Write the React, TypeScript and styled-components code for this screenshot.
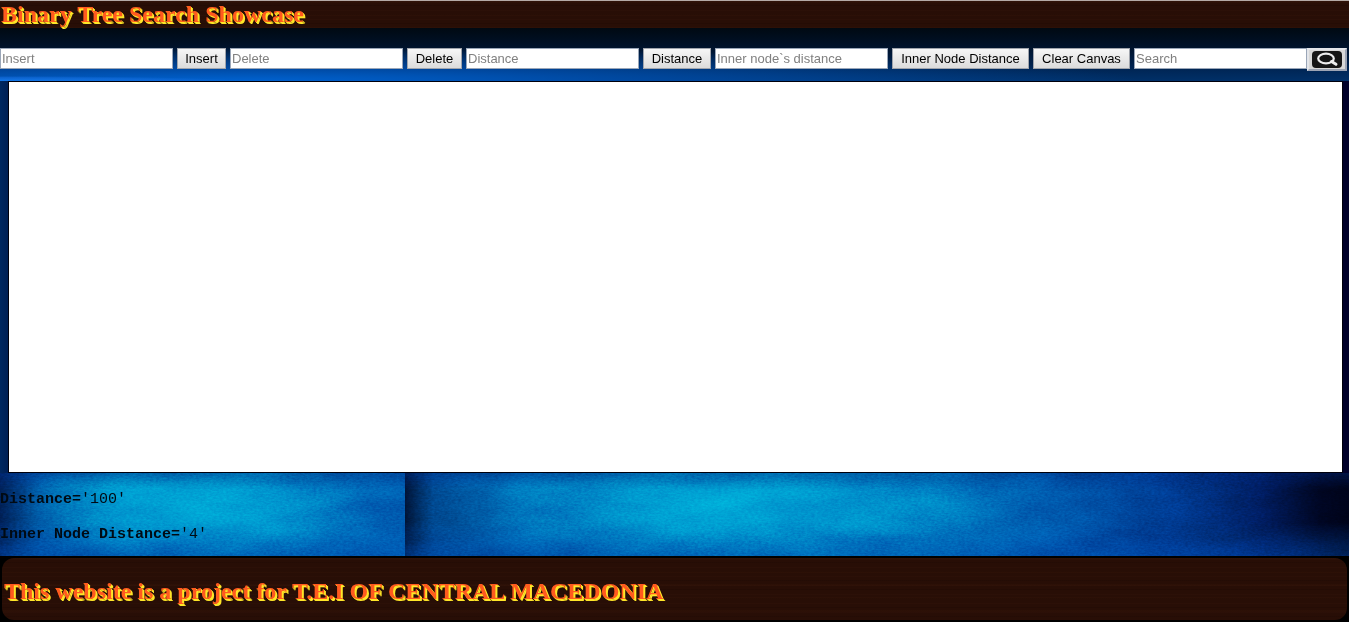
import React from "react";
import styled, { createGlobalStyle } from "styled-components";

const GlobalStyle = createGlobalStyle`
  *, *::before, *::after { box-sizing: border-box; }
  body { margin: 0; background: #fff; }
`;

const woodGrain = `
  repeating-linear-gradient(180deg, rgba(70, 30, 18, 0.12) 0 1px, transparent 1px 4px, rgba(10, 0, 0, 0.12) 4px 5px, transparent 5px 9px),
  repeating-linear-gradient(180deg, rgba(62, 26, 10, 0.2) 0 2px, transparent 2px 13px)
`;

const Page = styled.div`
  margin-right: 1px;
  border-top: 1px solid #b4aaa6;
  background: #001440;
  overflow: hidden;
`;

const Header = styled.header`
  padding: 0 0 1px 1px;
  background: ${woodGrain}, #280e06;
`;

const Title = styled.h1`
  margin: 0;
  font: bold 24px/26px "Liberation Serif", serif;
  color: #ff5a1e;
  text-shadow: 1px 1px 0 #ffe628, 2px 2px 0 #ffe628;
  white-space: nowrap;
`;

const Toolbar = styled.form`
  display: flex;
  flex-wrap: wrap;
  align-items: flex-start;
  column-gap: 4px;
  padding: 20px 0 10px;
  background:
    radial-gradient(ellipse 240px 5px at 0 100%, #1478e8, rgba(20, 110, 224, 0.6) 70%, transparent 100%),
    radial-gradient(ellipse 900px 34px at 240px 100%, #0062d0 0%, rgba(0, 86, 190, 0.7) 40%, transparent 100%),
    linear-gradient(180deg, #000912 0%, #00122a 35%, #00224e 70%, #003068 100%);
`;

const Field = styled.input`
  width: 173px;
  height: 21px;
  padding: 1px;
  border: 1px solid #9aa6b8;
  border-radius: 0;
  background: #fff;
  font: 13px/17px "Liberation Sans", sans-serif;
  color: #000;
  &::placeholder { color: #808080; opacity: 1; }
`;

const Action = styled.button<{ $width: number }>`
  min-width: ${(p) => p.$width}px;
  height: 21px;
  padding: 0 6px;
  border: 1px solid #a0a4ac;
  border-radius: 0;
  background: linear-gradient(180deg, #f6f6f6, #dcdcdc);
  font: 13px/17px "Liberation Sans", sans-serif;
  color: #000;
  white-space: nowrap;
`;

const SearchGroup = styled.div`
  display: flex;
  align-items: flex-start;
`;

const SearchButton = styled.button`
  display: flex;
  align-items: center;
  justify-content: center;
  width: 40px;
  height: 23px;
  padding: 0;
  border: 2px solid;
  border-color: #e4e6ea #9ca4b4 #9ca4b4 #e4e6ea;
  background: #d8d8d8;
`;

const Stage = styled.main`
  padding: 0 6px 0 8px;
  background: linear-gradient(90deg, #002860 0, #001f54 8px, #00002a 99%, #00002a);
`;

const Canvas = styled.canvas`
  display: block;
  width: 100%;
  height: 392px;
  border: 1px solid #00000c;
  background: #fff;
`;

const Readout = styled.section`
  display: grid;
  grid-template-columns: 30% 1fr;
`;

const Panel = styled.div<{ $fill: string }>`
  display: flex;
  flex-direction: column;
  gap: 18px;
  padding: 18px 0 13px;
  position: relative;
  overflow: hidden;
  background: ${(p) => p.$fill};
`;

const Texture = styled.svg`
  position: absolute;
  inset: 0;
  width: 100%;
  height: 100%;
  mix-blend-mode: overlay;
`;

const Value = styled.pre`
  position: relative;
  margin: 0;
  font: 15px/17px "Liberation Mono", monospace;
  color: #000a14;
`;

const Footer = styled.footer`
  background: #000;
`;

const FooterBoard = styled.div`
  padding: 20px 0 16px 2px;
  border: 2px solid #000;
  border-radius: 14px;
  background: ${woodGrain}, #280e06;
`;

const shade = "linear-gradient(180deg, rgba(0,40,130,.4), transparent 20% 60%, rgba(0,70,170,.5))";
const leftFill = `${shade}, radial-gradient(ellipse 170px 70px at 190px 38%, #00acd8, rgba(0,160,215,0) 100%), linear-gradient(90deg, #002058 0, #0058a8 40px, #007cc4 120px, #0080c6 270px, #0060b4 100%)`;
const rightFill = `${shade}, radial-gradient(ellipse 240px 75px at 320px 38%, #00acd8, rgba(0,160,215,0) 100%), linear-gradient(90deg, #001438 0, #004890 3%, #006cb8 12%, #007ec4 32%, #0080c4 55%, #005cb0 68%, #003c94 81%, #001c60 91%, #000624 97%, #000318 100%)`;

function Cloth({ id }: { id: string }) {
  return (
    <Texture aria-hidden="true">
      <filter id={id} x="0" y="0" width="100%" height="100%" colorInterpolationFilters="sRGB">
        <feTurbulence type="fractalNoise" baseFrequency="0.014 0.04" numOctaves="7" seed="8" />
        <feColorMatrix values="1 0 0 0 0  1 0 0 0 0  1 0 0 0 0  0 0 0 0 0.25" />
      </filter>
      <filter id={`${id}-grain`} x="0" y="0" width="100%" height="100%" colorInterpolationFilters="sRGB">
        <feTurbulence type="fractalNoise" baseFrequency="0.3 0.6" numOctaves="2" seed="3" />
        <feColorMatrix values="1 0 0 0 0  1 0 0 0 0  1 0 0 0 0  0 0 0 0 0.2" />
      </filter>
      <rect width="100%" height="100%" filter={`url(#${id})`} />
      <rect width="100%" height="100%" filter={`url(#${id}-grain)`} />
    </Texture>
  );
}

const fields = [
  { placeholder: "Insert", action: "Insert", width: 49 },
  { placeholder: "Delete", action: "Delete", width: 55 },
  { placeholder: "Distance", action: "Distance", width: 68 },
  { placeholder: "Inner node`s distance", action: "Inner Node Distance", width: 137 },
];

export default function App() {
  return (
    <Page>
      <GlobalStyle />
      <Header>
        <Title>Binary Tree Search Showcase</Title>
      </Header>
      <Toolbar onSubmit={(e) => e.preventDefault()}>
        {fields.map((f) => (
          <React.Fragment key={f.action}>
            <Field type="text" placeholder={f.placeholder} aria-label={f.placeholder} />
            <Action type="button" $width={f.width}>{f.action}</Action>
          </React.Fragment>
        ))}
        <Action type="button" $width={97}>Clear Canvas</Action>
        <SearchGroup>
          <Field type="text" placeholder="Search" aria-label="Search" />
          <SearchButton type="submit" aria-label="Run search">
            <svg width="30" height="17" viewBox="0 0 30 17">
              <rect width="30" height="17" rx="4" fill="#161616" />
              <ellipse cx="14" cy="7.5" rx="7.8" ry="4.8" fill="none" stroke="#eee" strokeWidth="2.2" />
              <path d="M19.5 10.5L24 13.3" stroke="#eee" strokeWidth="3" strokeLinecap="round" />
            </svg>
          </SearchButton>
        </SearchGroup>
      </Toolbar>
      <Stage>
        <Canvas aria-label="Binary tree canvas" />
      </Stage>
      <Readout>
        <Panel $fill={leftFill}>
          <Cloth id="cloth-left" />
          <Value><b>Distance=</b>'100'</Value>
          <Value><b>Inner Node Distance=</b>'4'</Value>
        </Panel>
        <Panel $fill={rightFill}>
          <Cloth id="cloth-right" />
        </Panel>
      </Readout>
      <Footer>
        <FooterBoard>
          <Title as="h2">This website is a project for T.E.I OF CENTRAL MACEDONIA</Title>
        </FooterBoard>
      </Footer>
    </Page>
  );
}
